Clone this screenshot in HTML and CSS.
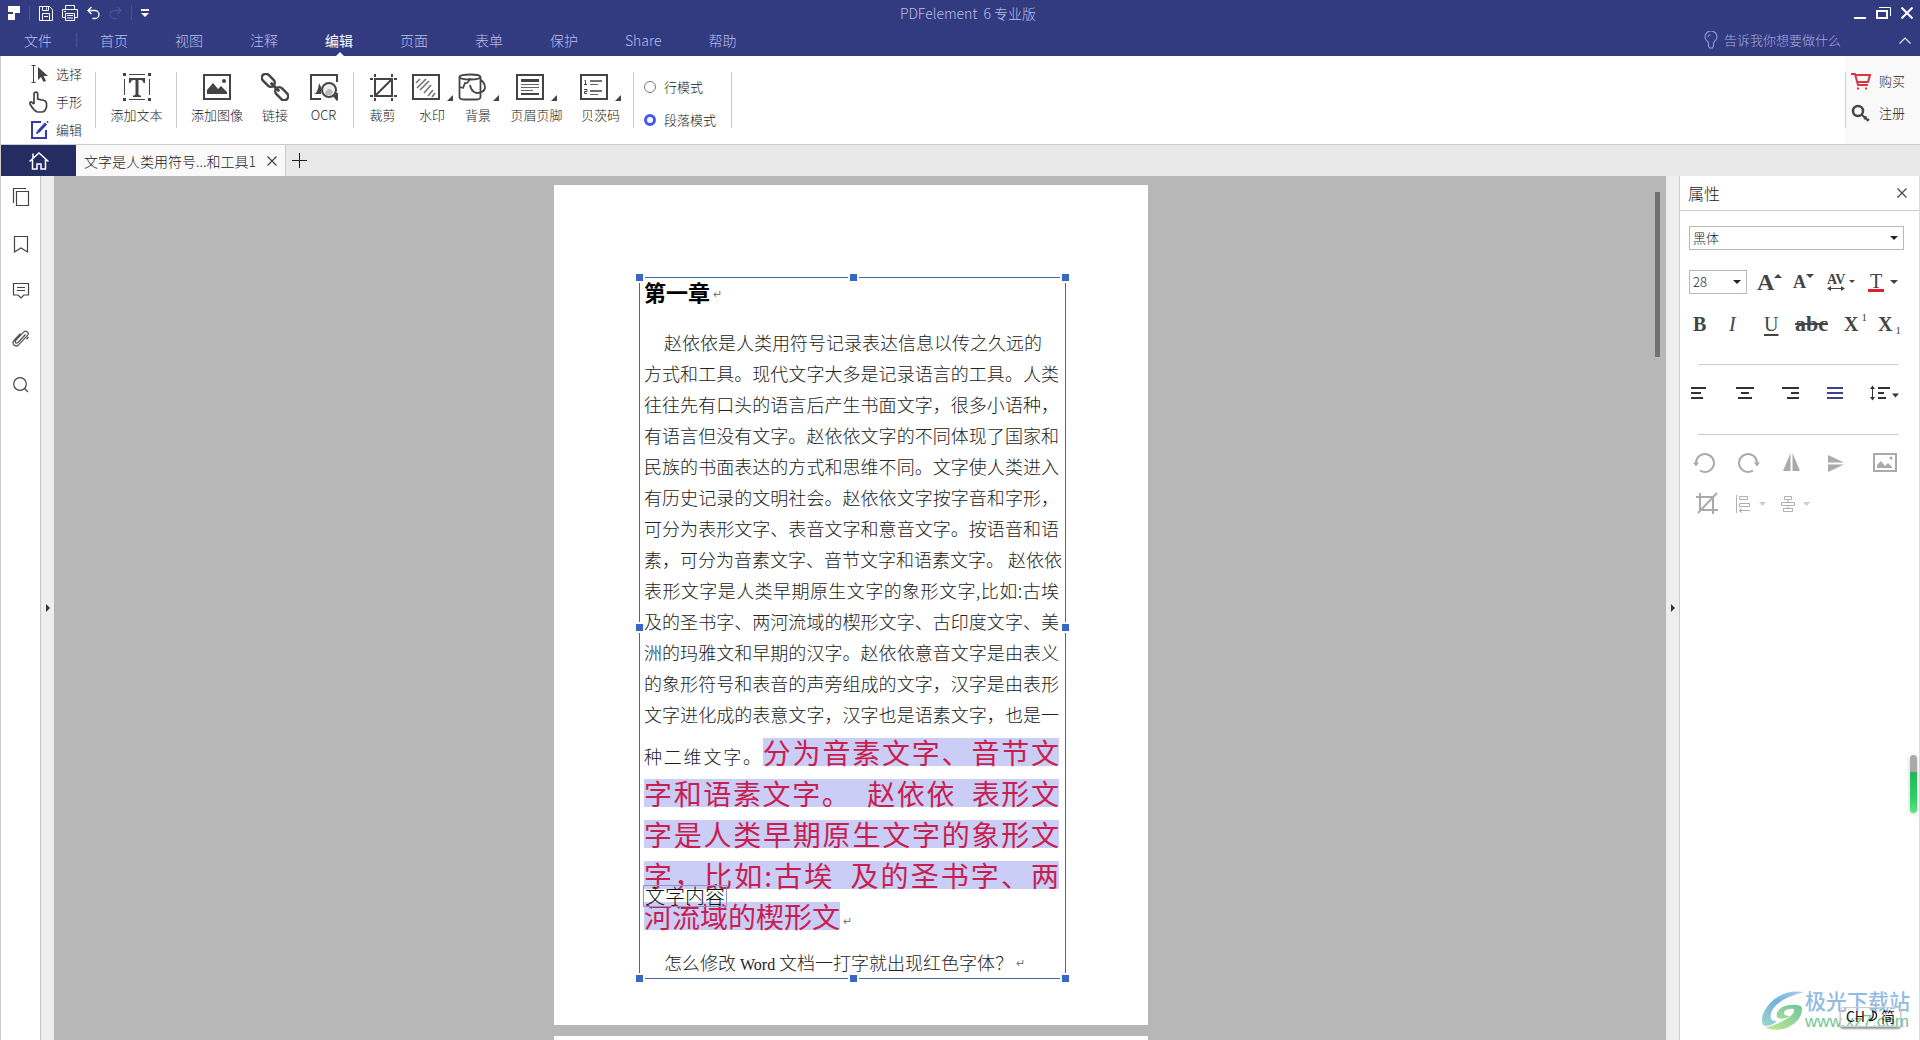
FILE: index.html
```html
<!DOCTYPE html>
<html lang="zh-CN">
<head>
<meta charset="utf-8">
<title>PDFelement 6 专业版</title>
<link rel="stylesheet" href="styles.css">
</head>
<body>
<header class="header">
  <div class="titlebar">
    <div class="quick">
      <svg class="logo" width="12" height="14" viewBox="0 0 12 14"><path d="M0 0h12v7H7v7H0V8h5V6H0z" fill="#fff"/></svg>
      <span class="vline"></span>
      <button class="icon-btn" aria-label="保存"><svg width="14" height="15" viewBox="0 0 14 15" fill="none" stroke="#fff"><path d="M.5.5h10l3 3v11H.5zM3.500 14V7.500h7V14M3.500.5v4h6v-4M7.500 1.500v2M5 10.500h4"/></svg></button>
      <button class="icon-btn" aria-label="打印"><svg width="16" height="16" viewBox="0 0 16 16" fill="none" stroke="#fff"><path d="M3.500 4V.5h9V4M3.500 12.500h-3v-8h15v8h-3M3.500 8.500h9v7h-9zM5 10.500h6M5 13h6M2 6.500h2"/></svg></button>
      <button class="icon-btn" aria-label="撤销"><svg width="13" height="14" viewBox="0 0 13 14" fill="none" stroke="#fff" stroke-width="1.300"><path d="M4.500 1 1 4.500 4.500 8M1 4.500h7a4 4 0 0 1 0 8H5.500"/></svg></button>
      <button class="icon-btn" aria-label="重做"><svg width="13" height="14" viewBox="0 0 13 14" fill="none" stroke="#4a5296" stroke-width="1.300"><path d="M8.500 1 12 4.500 8.500 8M12 4.500H5a4 4 0 0 0 0 8h2.500"/></svg></button>
      <span class="vline"></span>
      <button class="icon-btn" aria-label="自定义"><svg width="8" height="8" viewBox="0 0 8 8"><path d="M0 0h8v2H0zM0 4h8L4 8z" fill="#fff"/></svg></button>
    </div>
    <div class="app-title">PDFelement&nbsp; 6 专业版</div>
    <div class="win">
      <button class="icon-btn" aria-label="最小化"><svg width="12" height="12" viewBox="0 0 12 12"><path d="M0 10h12v2H0z" fill="#fff"/></svg></button>
      <button class="icon-btn" aria-label="还原"><svg width="15" height="12" viewBox="0 0 15 12" fill="none" stroke="#fff"><path d="M1 4h10v7H1z" stroke-width="2"/><path d="M3 .5h11.500V9"/></svg></button>
      <button class="icon-btn" aria-label="关闭"><svg width="12" height="12" viewBox="0 0 12 12" stroke="#fff" stroke-width="2"><path d="m.5.5 11 11m0-11-11 11"/></svg></button>
    </div>
  </div>
  <nav class="menu">
    <a href="#">文件</a><span class="vline"></span><a href="#">首页</a><a href="#">视图</a><a href="#">注释</a><a href="#" class="active">编辑</a><a href="#">页面</a><a href="#">表单</a><a href="#">保护</a><a href="#">Share</a><a href="#">帮助</a>
    <div class="ask">
      <svg width="14" height="18" viewBox="0 0 14 18" fill="none" stroke="#8d94cf" stroke-width="1.200"><path d="M4.500 12.500C4.500 10 1 9.500 1 6a6 6 0 0 1 12 0c0 3.500-3.500 4-3.500 6.500v2.500l-1 2h-3l-1-2zM4 6a3 3 0 0 1 2.500-2.500"/></svg>
      <span>告诉我你想要做什么</span>
      <button class="icon-btn collapse" aria-label="收起功能区"><svg width="12" height="7" viewBox="0 0 12 7" fill="none" stroke="#e4e6f8" stroke-width="1.200"><path d="m.5 6.500 5.500-5.500 5.500 5.500"/></svg></button>
    </div>
  </nav>
</header>

<section class="ribbon">
  <div class="modes">
    <button class="mode"><svg width="20" height="18" viewBox="0 0 20 18"><path d="M2.500.5h4M4.500.5v17M2.500 17.500h4" fill="none" stroke="#444"/><path d="M9 2v13l3-3 2.500 5 2.500-1.200L14.500 11H19z" fill="#444"/></svg>选择</button>
    <button class="mode"><svg width="20" height="22" viewBox="0 0 20 22" fill="none" stroke="#444" stroke-width="1.700"><path d="M5 13V3a1.800 1.800 0 0 1 3.700 0v5l6.500 1.500q2.300.8 2.300 3V16q-1.500 5-4.500 5H8.500Q5 20 1 13q-.5-2.500 1.500-2L5 13"/></svg>手形</button>
    <button class="mode"><svg width="20" height="18" viewBox="0 0 20 18" fill="none" stroke="#333bae" stroke-width="2"><path d="M12 1H3v16h14V9"/><path d="m9 11 8-8.500" stroke-width="3"/><path d="m18 1.500 1-1M7.500 12.500l1.500-1.500"/></svg>编辑</button>
  </div>
  <div class="group">
    <button class="tool w81"><span class="glyph"><svg width="28" height="28" viewBox="0 0 28 28"><path d="M0 0h3v3H0zM25 0h3v3h-3zM0 25h3v3H0zM25 25h3v3h-3z" fill="#444"/><path d="M6 1.500h16M6 26.500h16M1.500 6v16M26.500 6v16" stroke="#444"/><path d="M6 5h16v5h-1.500Q20 7 17.500 7h-2v14q0 1.500 2.500 1.500V24h-8v-1.500q2.500 0 2.500-1.500V7h-2Q8 7 7.500 10H6z" fill="#444"/></svg></span>添加文本</button>
  </div>
  <div class="group">
    <button class="tool w80"><span class="glyph"><svg width="28" height="26" viewBox="0 0 28 26"><path d="M1 1h26v24H1z" fill="none" stroke="#444" stroke-width="2"/><path d="M4 20v-4l6-7 5 6 3-3 6 6v2z" fill="#444"/><circle cx="21" cy="7" r="2" fill="#444"/></svg></span>添加图像</button>
    <button class="tool w36"><span class="glyph"><svg width="28" height="28" viewBox="0 0 28 28" fill="none" stroke="#444" stroke-width="2.500"><g transform="rotate(45 14 14)"><rect x="-3" y="10" width="15" height="8" rx="4"/><rect x="16" y="10" width="15" height="8" rx="4"/><path d="M8 14h12" stroke-width="3"/></g></svg></span>链接</button>
    <button class="tool w61"><span class="glyph"><svg width="28" height="28" viewBox="0 0 28 28"><path d="M11 26H1V2h26v7M27 20v6" fill="none" stroke="#444" stroke-width="2"/><path d="M4 21q4-1 5-11l2 4v7z" fill="#444"/><circle cx="19" cy="17" r="7" fill="#eee" stroke="#444" stroke-width="2"/><path d="M15 20q4-8 8-1l-2 3h-5z" fill="#bbb"/><path d="m24 22 4 5" stroke="#444" stroke-width="3"/></svg></span>OCR</button>
  </div>
  <div class="group extras">
    <button class="tool w57"><span class="glyph"><svg width="28" height="28" viewBox="0 0 28 28" fill="none" stroke="#444" stroke-width="2"><path d="M6 6h17v17H6zM1 6h3M25 6h3M1 23h3M25 23h3M6 1v3M6 25v3M23 1v3M23 25v3M7 22 22 7"/></svg></span>裁剪</button>
    <button class="tool w42"><span class="glyph drop"><svg width="28" height="26" viewBox="0 0 28 26"><path d="M1 1h26v24H1z" fill="none" stroke="#444" stroke-width="2"/><path d="m4 9 4-4m-3 9 9-9m-6 11L17 7m-5 12 7-8m-3 11 5-6m-1 7 3-4" stroke="#777" stroke-width="1.700"/></svg></span>水印</button>
    <button class="tool w50"><span class="glyph drop"><svg width="28" height="28" viewBox="0 0 28 28" fill="none" stroke="#444" stroke-width="1.800"><ellipse cx="12" cy="4" rx="10.500" ry="2.500"/><path d="M1.500 4v20q0 2.500 5 2.500h11q5 0 5-2.500V4M2 14l3 1 2-5q3 1 5-5M12 12q1 6 6 8 8 0 9-5 0-5-4-8"/></svg></span>背景</button>
    <button class="tool w67"><span class="glyph drop"><svg width="28" height="26" viewBox="0 0 28 26"><path d="M1 1h26v24H1z" fill="none" stroke="#444" stroke-width="2"/><path d="M5 5h18v3H5zM5 19h18v2H5z" fill="#444"/><path d="M5 10.500h18M5 13.500h18M5 16.500h12" stroke="#666"/></svg></span>页眉页脚</button>
    <button class="tool w61"><span class="glyph drop"><svg width="28" height="26" viewBox="0 0 28 26"><path d="M1 1h26v24H1z" fill="none" stroke="#444" stroke-width="2"/><path d="M4.500 6.500h1v4M4 10.500h3M4 15.500h3v2H4.500v2H7" fill="none" stroke="#444"/><path d="M10 7h12M10 17h12" stroke="#444" stroke-width="1.500"/><path d="M10 10.500h8M10 20.500h8" stroke="#666"/></svg></span>贝茨码</button>
  </div>
  <div class="group radios">
    <label><input type="radio" name="mode">行模式</label>
    <label><input type="radio" name="mode" checked>段落模式</label>
  </div>
  <div class="account">
    <button class="mode"><svg width="20" height="18" viewBox="0 0 20 18" fill="none" stroke="#dc3545" stroke-width="2"><path d="M0 2h4l3 11h10M4.500 3H19l-2 7H7"/><path d="M6 16.500h2M14 16.500h2"/></svg>购买</button>
    <button class="mode"><svg width="20" height="18" viewBox="0 0 20 18" fill="none" stroke="#444"><circle cx="7" cy="7" r="5" stroke-width="2.500"/><path d="m10.500 10.500 7 6.500M13 15l2.500-2.500M16 17l2-2" stroke-width="2"/></svg>注册</button>
  </div>
</section>

<div class="tabs">
  <a class="home" href="#" aria-label="主页"><svg width="20" height="18" viewBox="0 0 20 18" fill="none" stroke="#fff" stroke-width="1.500"><path d="M.5 9.500 10 1l9.500 8.500M3.500 7.500v9.500h4.500v-5h4v5h4.500V7.500M4 6V1.500"/></svg></a>
  <div class="tab"><span>文字是人类用符号...和工具1</span><button class="icon-btn" aria-label="关闭标签"><svg width="10" height="10" viewBox="0 0 10 10" stroke="#444" stroke-width="1.200"><path d="m.5.5 9 9m0-9-9 9"/></svg></button></div>
  <button class="icon-btn add" aria-label="新建标签"><svg width="15" height="15" viewBox="0 0 15 15" stroke="#222"><path d="M7.500 0v15M0 7.500h15"/></svg></button>
</div>

<main class="work">
  <aside class="rail">
    <button class="icon-btn" aria-label="缩略图"><svg width="18" height="20" viewBox="0 0 18 20" fill="none" stroke="#444" stroke-width="1.200"><path d="M4.500 4.500h12v14h-12zM1.500 16V1.500H14"/></svg></button>
    <button class="icon-btn" aria-label="书签"><svg width="18" height="20" viewBox="0 0 18 20" fill="none" stroke="#444" stroke-width="1.200"><path d="M2.500 2.500h13v15.500L9 14l-6.500 4z"/></svg></button>
    <button class="icon-btn" aria-label="注释"><svg width="18" height="20" viewBox="0 0 18 20" fill="none" stroke="#444" stroke-width="1.200"><path d="M1.500 2.500h15v11.500H12l-3 3-3-3H1.500zM5 6.500h8M5 9.500h8"/></svg></button>
    <button class="icon-btn" aria-label="附件"><svg width="18" height="20" viewBox="0 0 18 20" fill="none" stroke="#555" stroke-width="1.300"><path d="m13.500 6.500-7.500 8q-1.500 1-2.300.2-.9-1 .1-2.300l8-8.500q1.800-1.600 3.600 0 1.600 1.700.1 3.500l-9 9.500q-2.300 2-4.500.2-2-2.200 0-4.600l6.500-7"/><path d="m16.500 9-2 2.200"/></svg></button>
    <button class="icon-btn" aria-label="搜索"><svg width="18" height="20" viewBox="0 0 18 20" fill="none" stroke="#444" stroke-width="1.200"><circle cx="8" cy="9" r="6.300"/><path d="m12.500 13.500 3.500 3.500"/></svg></button>
  </aside>
  <button class="splitter" aria-label="展开左侧栏"><span class="tri-right"></span></button>
  <div class="canvas">
    <article class="page">
      <div class="frame">
        <i class="h tl"></i><i class="h tc"></i><i class="h tr"></i><i class="h ml"></i><i class="h mr"></i><i class="h bl"></i><i class="h bc"></i><i class="h br"></i>
        <h1>第一章<span class="ret">↵</span></h1>
        <p>
          <span class="line first">赵依依是人类用符号记录表达信息以传之久远的</span>
          <span class="line">方式和工具。现代文字大多是记录语言的工具。人类</span>
          <span class="line">往往先有口头的语言后产生书面文字，很多小语种，</span>
          <span class="line">有语言但没有文字。赵依依文字的不同体现了国家和</span>
          <span class="line">民族的书面表达的方式和思维不同。文字使人类进入</span>
          <span class="line">有历史记录的文明社会。赵依依文字按字音和字形，</span>
          <span class="line">可分为表形文字、表音文字和意音文字。按语音和语</span>
          <span class="line">素，可分为音素文字、音节文字和语素文字。 赵依依</span>
          <span class="line">表形文字是人类早期原生文字的象形文字,比如:古埃</span>
          <span class="line">及的圣书字、两河流域的楔形文字、古印度文字、美</span>
          <span class="line">洲的玛雅文和早期的汉字。赵依依意音文字是由表义</span>
          <span class="line">的象形符号和表音的声旁组成的文字，汉字是由表形</span>
          <span class="line">文字进化成的表意文字，汉字也是语素文字，也是一</span>
        </p>
        <p class="big">
          <span class="line">种二维文字。<mark>分为音素文字、音节文</mark></span>
          <span class="line"><mark>字和语素文字。&ensp;赵依依&ensp;表形文</mark></span>
          <span class="line"><mark>字是人类早期原生文字的象形文</mark></span>
          <span class="line"><mark>字，比如:古埃&ensp;及的圣书字、两</mark></span>
          <span class="line left"><mark>河流域的楔形文</mark><span class="ret">↵</span></span>
        </p>
        <p class="last"><span class="line first">怎么修改&nbsp;<span class="latin">Word</span>&nbsp;文档一打字就出现红色字体？<span class="ret">↵</span></span></p>
        <div class="textbox">文字内容</div>
      </div>
    </article>
    <article class="page"></article>
    <div class="thumb"></div>
  </div>
  <button class="splitter" aria-label="收起属性栏"><span class="tri-right"></span></button>
  <aside class="panel">
    <div class="panel-head"><h2>属性</h2><button class="icon-btn" aria-label="关闭属性栏"><svg width="10" height="10" viewBox="0 0 10 10" stroke="#444" stroke-width="1.200"><path d="m.5.5 9 9m0-9-9 9"/></svg></button></div>
    <div class="panel-body">
      <label class="pick"><select aria-label="字体"><option>黑体</option></select></label>
      <div class="row sizes">
        <label class="pick"><select aria-label="字号"><option>28</option></select></label>
        <button class="icon-btn serif grow" aria-label="增大字号">A<svg width="8" height="4" viewBox="0 0 8 4"><path d="M0 4h8L4 0z" fill="#444"/></svg></button>
        <button class="icon-btn serif shrink" aria-label="减小字号">A<svg width="8" height="4" viewBox="0 0 8 4"><path d="M0 0h8L4 4z" fill="#444"/></svg></button>
        <button class="icon-btn serif av" aria-label="字符间距"><span>AV<svg width="18" height="5" viewBox="0 0 18 5"><path d="M0 2.500 4 0v2h10V0l4 2.500L14 5V3H4v2z" fill="#444"/></svg></span><svg width="6" height="4" viewBox="0 0 6 4"><path d="M0 0h6L3 3z" fill="#444"/></svg></button>
        <button class="icon-btn serif color" aria-label="字体颜色"><span>T</span><svg width="8" height="4" viewBox="0 0 8 4"><path d="M0 0h8L4 4z" fill="#444"/></svg></button>
      </div>
      <div class="row styles">
        <button class="icon-btn serif"><b>B</b></button><button class="icon-btn serif"><em>I</em></button><button class="icon-btn serif under">U</button><button class="icon-btn serif"><s>abc</s></button><button class="icon-btn serif"><b>X</b><sup>1</sup></button><button class="icon-btn serif"><b>X</b><sub>1</sub></button>
      </div>
      <hr>
      <div class="row five">
        <button class="icon-btn" aria-label="左对齐"><svg width="32" height="24" viewBox="0 0 32 24" stroke="#333" stroke-width="2"><path d="M2 7h15M2 12h10M2 17h12"/></svg></button>
        <button class="icon-btn" aria-label="居中"><svg width="32" height="24" viewBox="0 0 32 24" stroke="#333" stroke-width="2"><path d="M2 7h18M7 12h8M4 17h14"/></svg></button>
        <button class="icon-btn" aria-label="右对齐"><svg width="32" height="24" viewBox="0 0 32 24" stroke="#333" stroke-width="2"><path d="M3 7h17M12 12h8M8 17h12"/></svg></button>
        <button class="icon-btn" aria-label="两端对齐"><svg width="32" height="24" viewBox="0 0 32 24" stroke="#3b4390" stroke-width="2"><path d="M3 7h16M3 12h16M3 17h16"/></svg></button>
        <button class="icon-btn" aria-label="行距"><svg width="32" height="24" viewBox="0 0 32 24" stroke="#333" stroke-width="2"><path d="M9 7h12M9 12h6M9 17h8"/><path d="M3.500 7v10" stroke-width="1"/><path d="M3.500 4.500 6 8H1zM3.500 19.500 6 16H1zM23 12.500h7l-3.500 4z" fill="#333" stroke="none"/></svg></button>
      </div>
      <hr>
      <div class="row five dim">
        <button class="icon-btn" aria-label="逆时针旋转"><svg width="32" height="24" viewBox="0 0 32 24" fill="none" stroke="#aaa" stroke-width="2"><path d="M7 12A9 9 0 1 1 11 19.500"/><path d="M4 11.500h6l-3 4z" fill="#aaa" stroke="none"/></svg></button>
        <button class="icon-btn" aria-label="顺时针旋转"><svg width="32" height="24" viewBox="0 0 32 24" fill="none" stroke="#aaa" stroke-width="2"><path d="M23 12A9 9 0 1 0 19 19.500"/><path d="M20 11.500h6l-3 4z" fill="#aaa" stroke="none"/></svg></button>
        <button class="icon-btn" aria-label="水平翻转"><svg width="32" height="24" viewBox="0 0 32 24" fill="#aaa"><path d="M11.500 2v18H4zM13.500 2v18H21z"/></svg></button>
        <button class="icon-btn" aria-label="垂直翻转"><svg width="32" height="24" viewBox="0 0 32 24" fill="#aaa"><path d="M4 4v7.500h16zM4 21v-7.500h16z"/></svg></button>
        <button class="icon-btn" aria-label="替换图像"><svg width="32" height="24" viewBox="0 0 32 24"><path d="M5 3h22v17H5z" fill="none" stroke="#aaa" stroke-width="2"/><path d="M8 17v-3l4-4 4 5 3-3 4 4v1z" fill="#aaa"/><circle cx="22" cy="7" r="1.500" fill="#aaa"/></svg></button>
      </div>
      <div class="row five dim">
        <button class="icon-btn" aria-label="裁剪图像"><svg width="32" height="24" viewBox="0 0 32 24" fill="none" stroke="#aaa" stroke-width="2"><path d="M7 5h17v17M11 1v17h18M9 21 28 1" /></svg></button>
        <button class="icon-btn" aria-label="对齐"><svg width="32" height="24" viewBox="0 0 32 24" fill="none" stroke="#b0b0b0"><path d="M2.500 3v18M5.500 4.500h8v3h-8zM5.500 11.500h10v3h-10zM5 18.500h11M8 16.500l-3 2 3 2"/><path d="M25 10h7l-3.500 4z" fill="#ccc" stroke="none"/></svg></button>
        <button class="icon-btn" aria-label="分布"><svg width="32" height="24" viewBox="0 0 32 24" fill="none" stroke="#b0b0b0"><path d="M5.500 4.500h7v3h-7zM2.500 10.500h13v3h-13zM4.500 16.500h9v3h-9zM9 7.500v3M9 13.500v3"/><path d="M24 10h7l-3.500 4z" fill="#ccc" stroke="none"/></svg></button>
      </div>
    </div>
  </aside>
</main>

<div class="meter"></div>
<div class="watermark">
  <svg width="42" height="40" viewBox="0 0 42 40"><defs><linearGradient id="b" x1="0" y1="1" x2="1" y2="0"><stop offset="0" stop-color="#8fd0c0"/><stop offset=".5" stop-color="#5aa5dc"/><stop offset="1" stop-color="#9cc6ee"/></linearGradient><linearGradient id="g" x1="0" y1="1" x2="1" y2="0"><stop offset="0" stop-color="#b8e67a"/><stop offset="1" stop-color="#55b990"/></linearGradient></defs><path d="M42 1Q22-2 8 12-3 25 1 34q6 3 14-4Q7 31 9 22 14 8 42 1z" fill="url(#b)"/><path d="M3 37q20 6 33-8 6-9 3-14-9-3-19 1-7 5-5 10 5 4 13-1-7 0-6-4 3-4 10-3 2 9-29 19z" fill="url(#g)"/></svg>
  <div><strong>极光下载站</strong><span>www.xz7.com</span></div>
</div>
<div class="ime">CH<svg width="10" height="12" viewBox="0 0 10 12" fill="none" stroke="#222" stroke-width="1.300"><path d="M4.500 1Q9 2 8.500 6.500 7 11 1 10.500 7 8 4.500 1z"/></svg>简</div>
</body>
</html>
```
FILE: styles.css
```css
* { box-sizing: border-box; }
body {
  margin: 0;
  height: 100vh;
  display: flex;
  flex-direction: column;
  overflow: hidden;
  font: 300 13px/20px "Noto Sans CJK SC", sans-serif;
  color: #222;
  background: #fff;
}
button { font: inherit; color: inherit; background: none; border: 0; padding: 0; }
a { color: inherit; text-decoration: none; }
svg { display: block; flex: none; }
.icon-btn { display: flex; align-items: center; }

/* header */
.header { background: #323a80; color: #b9beea; flex: none; }
.titlebar {
  height: 26px;
  display: grid;
  grid-template-columns: 1fr auto 1fr;
  align-items: center;
  padding: 0 7px 0 8px;
}
.quick { display: flex; align-items: center; gap: 9px; }
.vline { width: 1px; height: 14px; background: #4b539a; }
.app-title { padding-left: 15px; font-size: 14px; }
.win { display: flex; justify-content: flex-end; gap: 10px; }
.menu {
  height: 30px;
  display: flex;
  align-items: center;
  gap: 47px;
  padding: 0 9px 2px 24px;
  font-size: 14px;
}
.menu .vline { margin: 0 -24px 0 -23px; }
.menu .active {
  position: relative;
  color: #fff;
  font-weight: 400;
}
.menu .active::after {
  content: "";
  position: absolute;
  left: 11px;
  bottom: -6px;
  border: 4px solid transparent;
  border-top: 0;
  border-bottom-color: #fff;
}
.ask { margin-left: auto; display: flex; align-items: center; gap: 6px; font-size: 13px; color: #a5abde; }
.collapse { margin-left: 52px; }

/* ribbon */
.ribbon {
  flex: none;
  height: 89px;
  display: flex;
  align-items: stretch;
  border-bottom: 1px solid #ccc;
  border-left: 1px solid #ccc;
}
.modes { width: 95px; padding: 4px 0 0 28px; }
.mode { display: flex; align-items: center; gap: 7px; height: 28px; }
.group, .modes { position: relative; display: flex; }
.modes { flex-direction: column; }
.group::after, .modes::after, .account::before {
  content: "";
  position: absolute;
  right: 0;
  top: 16px;
  width: 1px;
  height: 56px;
  background: #ccc;
}
.tool { display: flex; flex-direction: column; align-items: center; padding-top: 17px; gap: 4px; }
.extras { padding-right: 3px; }
.glyph { height: 28px; display: flex; align-items: center; }
.drop { gap: 7px; }
.drop::after {
  content: "";
  align-self: flex-end;
  border: 3px solid #444;
  border-top-color: transparent;
  border-left-color: transparent;
}
.w36 { width: 36px; }
.w42 { width: 42px; }
.w50 { width: 50px; }
.w57 { width: 57px; }
.w61 { width: 61px; }
.w67 { width: 67px; }
.w80 { width: 80px; }
.w81 { width: 81px; }
.radios { width: 98px; flex-direction: column; gap: 13px; padding: 21px 0 0 10px; }
.radios label { display: flex; align-items: center; gap: 8px; }
.radios input { appearance: none; margin: 0; width: 12px; height: 12px; border: 1px solid #777; border-radius: 50%; background: #fff; }
.radios input:checked { border: 3px solid #4657ee; }
.account {
  position: relative;
  margin-left: auto;
  width: 75px;
  padding: 11px 0 0 6px;
  background: #f9f9f9;
  display: flex;
  flex-direction: column;
  gap: 4px;
}
.account::before { left: 0; }
.account .mode { gap: 8px; }

/* document tabs */
.tabs { flex: none; height: 31px; display: flex; background: #e9e9e9; border-left: 1px solid #ccc; }
.home { width: 75px; background: #252c62; display: flex; align-items: center; justify-content: center; }
.tab {
  width: 210px;
  padding: 0 8px 0 8px;
  display: flex;
  align-items: center;
  justify-content: space-between;
  background: #f9f9f9;
  border-right: 1px solid #ccc;
  font-size: 14px;
  white-space: nowrap;
}
.add { margin-left: 6px; }

/* work area */
.work { flex: 1; min-height: 0; display: flex; border-left: 1px solid #ccc; }
.rail {
  width: 40px;
  padding: 11px 0 0 11px;
  display: flex;
  flex-direction: column;
  gap: 27px;
  border-right: 1px solid #c4c4c4;
}
.splitter { width: 13px; background: #eee; display: flex; align-items: center; justify-content: center; }
.tri-right { border: 4px solid transparent; border-left-color: #333; border-right: 0; }
.canvas {
  position: relative;
  flex: 1;
  min-width: 0;
  overflow: hidden;
  background: #b7b7b7;
  padding: 9px 18px 0 0;
  display: flex;
  flex-direction: column;
  align-items: center;
  gap: 11px;
}
.thumb { position: absolute; right: 6px; top: 16px; width: 5px; height: 165px; background: #727272; }
.page { flex: none; width: 594px; min-height: 840px; padding: 92px 82px 0 85px; background: #fff; }
.frame { position: relative; border: 1px solid #3f69ab; padding: 0 6px 0 4px; font-size: 18px; }
.frame h1, .frame p { position: relative; margin: 0; }
.frame h1 { font-size: 22px; line-height: 26px; font-weight: 700; color: #000; margin-bottom: 23px; }
.line { display: block; line-height: 31px; white-space: nowrap; text-align: justify; text-align-last: justify; }
.line.first { padding-left: 20px; text-align-last: left; }
.big { padding-top: 6px; }
.big .line { line-height: 41px; height: 41px; }
.big .left { text-align-last: left; }
mark {
  font-size: 28px;
  font-weight: 400;
  line-height: 28px;
  color: #c81e50;
  background: linear-gradient(#cacdf5, #cacdf5) center / 100% 28px no-repeat;
}
.last { padding-top: 6px; }
.latin { font: 16px "Liberation Serif", serif; }
.ret { font: 300 11px "DejaVu Sans", sans-serif; color: #777; margin-left: 3px; vertical-align: 3px; }
.textbox {
  position: absolute;
  left: 3px;
  top: 607px;
  border: 1px solid #8a97c4;
  font-size: 20px;
  line-height: 20px;
  padding: 0 1px;
  color: #111;
}
.h { position: absolute; width: 7px; height: 7px; background: #3569c4; outline: 2px solid #fff; }
.tl, .tc, .tr { top: -4px; }
.bl, .bc, .br { bottom: -4px; }
.tl, .ml, .bl { left: -4px; }
.tr, .mr, .br { right: -4px; }
.tc, .bc { left: calc(50% - 3px); }
.ml, .mr { top: calc(50% - 4px); }

/* properties */
.panel { width: 241px; border-left: 1px solid #ccc; border-right: 1px solid #ddd; }
.panel-head {
  height: 35px;
  display: flex;
  align-items: center;
  justify-content: space-between;
  padding: 0 12px 0 8px;
  border-bottom: 1px solid #ccc;
}
.panel-head h2 { margin: 0; font-size: 16px; font-weight: 300; }
.panel-body { padding: 15px 15px 0 9px; }
.pick { position: relative; display: block; }
.pick select {
  appearance: none;
  width: 100%;
  height: 24px;
  border: 1px solid #b8b8b8;
  border-radius: 0;
  padding: 0 3px;
  background: #fff;
  font: inherit;
  color: #222;
  display: block;
}
.pick::after {
  content: "";
  position: absolute;
  right: 6px;
  top: 10px;
  border: 4px solid transparent;
  border-top-color: #222;
  border-bottom: 0;
}
.row { display: grid; align-items: center; }
.sizes { grid-template-columns: 68px 36px 34px 41px 1fr; margin-top: 16px; height: 32px; }
.sizes .pick { width: 58px; }
.serif { font-family: "Liberation Serif", serif; color: #444; line-height: 24px; }
.grow { font-size: 24px; font-weight: 700; }
.shrink { font-size: 18px; font-weight: 700; }
.grow svg, .shrink svg { align-self: flex-start; margin-top: 4px; }
.av { font-size: 14px; font-weight: 700; line-height: 13px; gap: 4px; }
.color { gap: 6px; font-size: 20px; }
.color span { width: 16px; line-height: 16px; text-align: center; border-bottom: 3px solid #e0202a; }
.styles { grid-template-columns: 36px 35px 31px 49px 34px 1fr; padding-left: 4px; margin: 10px -6px 0 0; height: 32px; }
.styles .icon-btn { font-size: 20px; font-weight: 400; }
.under { text-decoration: underline; text-underline-offset: 3px; }
.styles s { font-size: 22px; font-weight: 700; line-height: 24px; }
.styles sup, .styles sub { font-size: 11px; line-height: 11px; margin-left: 3px; }
.styles sup { align-self: flex-start; }
.styles sub { align-self: flex-end; }
hr { border: 0; border-top: 1px solid #ccc; margin: 24px 6px 16px 9px; }
.five { grid-template-columns: repeat(5, 45px); height: 24px; }
.five + hr { margin-top: 29px; }
.dim + .dim { margin-top: 17px; }

/* desktop overlays */
.meter {
  position: absolute;
  right: 3px;
  top: 755px;
  width: 7px;
  height: 58px;
  border-radius: 4px;
  background: linear-gradient(#aaa 17px, #22b75c 17px, #2fcf6c 75%, #5ee57c);
  box-shadow: 0 1px 4px #ccc;
}
.watermark { position: absolute; right: 10px; bottom: 7px; display: flex; align-items: center; gap: 1px; opacity: 0.85; }
.watermark div { display: flex; flex-direction: column; line-height: 22px; }
.watermark strong { font-size: 21px; font-weight: 500; color: #7fb0de; }
.watermark span { font: 17px/22px "Liberation Sans", sans-serif; color: #56bd82; }
.ime {
  position: absolute;
  right: 19px;
  bottom: 13px;
  height: 20px;
  padding: 0 5px 2px;
  display: flex;
  align-items: center;
  gap: 3px;
  border: 1px solid #ccc;
  border-radius: 3px;
  box-shadow: 0 2px 2px #999;
  font-size: 14px;
  font-weight: 400;
  color: #111;
}
```
